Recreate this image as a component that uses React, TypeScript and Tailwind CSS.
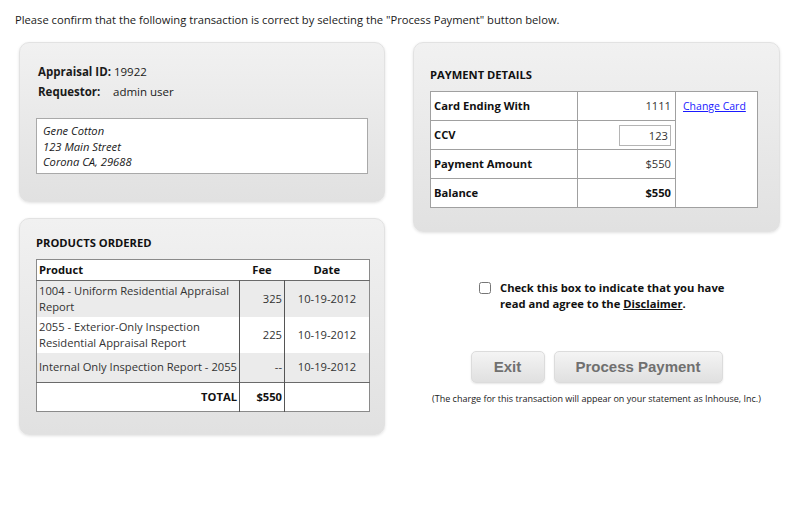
import React from 'react';

const font = "font-['Open_Sans','Noto_Sans',sans-serif]";

const Panel = ({ className = '', children }: { className?: string; children: React.ReactNode }) => (
  <div
    className={`rounded-[10px] border border-[#e2e2e2] bg-gradient-to-b from-[#f1f1f1] to-[#e1e1e1] shadow-[0_1px_3px_rgba(0,0,0,0.12)] ${className}`}
  >
    {children}
  </div>
);

const products = [
  { name: '1004 - Uniform Residential Appraisal Report', fee: '325', date: '10-19-2012', shaded: true },
  { name: '2055 - Exterior-Only Inspection Residential Appraisal Report', fee: '225', date: '10-19-2012', shaded: false },
  { name: 'Internal Only Inspection Report - 2055', fee: '--', date: '10-19-2012', shaded: true },
];

const App = () => {
  return (
    <div className={`w-[800px] h-[528px] bg-white text-[#1a1a1a] text-[11.2px] ${font}`}>
      <p className="pl-[15px] pt-[12px] leading-[16px]">
        Please confirm that the following transaction is correct by selecting the "Process Payment" button below.
      </p>

      <div className="flex mt-[14px] pl-[19px] gap-[28px]">
        {/* left column */}
        <div className="w-[366px] flex flex-col gap-[16px]">
          <Panel className="h-[160px] pt-[19px] px-[16px]">
            <div className="pl-[2px] leading-[20px] text-[11.5px]">
              <div>
                <span className="font-bold">Appraisal ID:</span> 19922
              </div>
              <div className="flex">
                <span className="font-bold w-[75px]">Requestor:</span>
                <span>admin user</span>
              </div>
            </div>
            <div className="mt-[16px] h-[56px] border border-[#a9a9a9] bg-white px-[6px] pt-[4px] italic leading-[15.5px]">
              <div>Gene Cotton</div>
              <div>123 Main Street</div>
              <div>Corona CA, 29688</div>
            </div>
          </Panel>

          <Panel className="h-[217px] pt-[16px] px-[16px]">
            <div className="font-bold leading-[16px] mb-[8px] text-[#111]">PRODUCTS ORDERED</div>
            <table className="w-[333px] border-collapse border border-[#8a8a8a] bg-white table-fixed text-[#333]">
              <colgroup>
                <col className="w-[203px]" />
                <col className="w-[45px]" />
                <col className="w-[85px]" />
              </colgroup>
              <thead>
                <tr className="h-[21px] border-b border-[#6a6a6a]">
                  <th className="text-left font-bold pl-[2px] text-[#111]">Product</th>
                  <th className="text-center font-bold text-[#111]">Fee</th>
                  <th className="text-center font-bold text-[#111]">Date</th>
                </tr>
              </thead>
              <tbody className="leading-[16px]">
                {products.map((p) => (
                  <tr key={p.name} className={`h-[29px] ${p.shaded ? 'bg-[#ebebeb]' : 'bg-white'}`}>
                    <td className="pl-[2px] pr-[1px] py-[2px] border-r border-[#555]">{p.name}</td>
                    <td className="text-right pr-[2px] border-r border-[#555]">{p.fee}</td>
                    <td className="text-center">{p.date}</td>
                  </tr>
                ))}
                <tr className="h-[29px] border-t border-[#6a6a6a] text-[#111]">
                  <td className="text-right font-bold pr-[2px] border-r border-[#555]">TOTAL</td>
                  <td className="text-right font-bold pr-[2px] border-r border-[#555]">$550</td>
                  <td></td>
                </tr>
              </tbody>
            </table>
          </Panel>
        </div>

        {/* right column */}
        <div className="w-[367px] flex flex-col items-center">
          <Panel className="w-full h-[190px] pt-[24px] px-[16px]">
            <div className="font-bold leading-[16px] mb-[8px] text-[#111]">PAYMENT DETAILS</div>
            <table className="w-[327px] border-collapse border border-[#a0a0a0] bg-white table-fixed">
              <colgroup>
                <col className="w-[147px]" />
                <col className="w-[98px]" />
                <col className="w-[82px]" />
              </colgroup>
              <tbody>
                <tr className="h-[29px]">
                  <td className="border border-[#a0a0a0] pl-[3px] font-bold text-[#111]">Card Ending With</td>
                  <td className="border border-[#a0a0a0] text-right pr-[4px] text-[#333]">1111</td>
                  <td rowSpan={4} className="border border-[#a0a0a0] align-top pl-[7px] pt-[6px]">
                    <a href="#" className="text-[10.5px] text-[#1a1aff] underline leading-[14px]">
                      Change Card
                    </a>
                  </td>
                </tr>
                <tr className="h-[29px]">
                  <td className="border border-[#a0a0a0] pl-[3px] font-bold text-[#111]">CCV</td>
                  <td className="border border-[#a0a0a0] text-right pr-[4px]">
                    <input
                      readOnly
                      value="123"
                      className="w-[52px] h-[21px] border border-[#b5b5b5] text-right pr-[2px] text-[#333] outline-none"
                    />
                  </td>
                </tr>
                <tr className="h-[29px]">
                  <td className="border border-[#a0a0a0] pl-[3px] font-bold text-[#111]">Payment Amount</td>
                  <td className="border border-[#a0a0a0] text-right pr-[4px] text-[#333]">$550</td>
                </tr>
                <tr className="h-[29px]">
                  <td className="border border-[#a0a0a0] pl-[3px] font-bold text-[#111]">Balance</td>
                  <td className="border border-[#a0a0a0] text-right pr-[4px] font-bold text-[#111]">$550</td>
                </tr>
              </tbody>
            </table>
          </Panel>

          <label className="mt-[48px] flex items-start gap-[9px] pl-[16px] font-bold leading-[16px] text-[#111]">
            <input type="checkbox" className="mt-[2px] w-[12px] h-[12px] accent-[#888]" />
            <span className="w-[230px]">
              Check this box to indicate that you have read and agree to the{' '}
              <span className="underline">Disclaimer</span>.
            </span>
          </label>

          <div className="mt-[39px] flex gap-[9px] font-['Liberation_Sans',Arial,sans-serif] font-bold text-[15px] text-[#707070]">
            <button className="w-[74px] h-[32px] rounded-[5px] border border-[#dcdcdc] bg-gradient-to-b from-[#f4f4f4] to-[#e0e0e0] shadow-[0_1px_2px_rgba(0,0,0,0.1)]">
              Exit
            </button>
            <button className="w-[169px] h-[32px] rounded-[5px] border border-[#dcdcdc] bg-gradient-to-b from-[#f4f4f4] to-[#e0e0e0] shadow-[0_1px_2px_rgba(0,0,0,0.1)]">
              Process Payment
            </button>
          </div>

          <p className="mt-[10px] text-[9px] leading-[12px] text-[#222]">
            (The charge for this transaction will appear on your statement as Inhouse, Inc.)
          </p>
        </div>
      </div>
    </div>
  );
};

export default App;
